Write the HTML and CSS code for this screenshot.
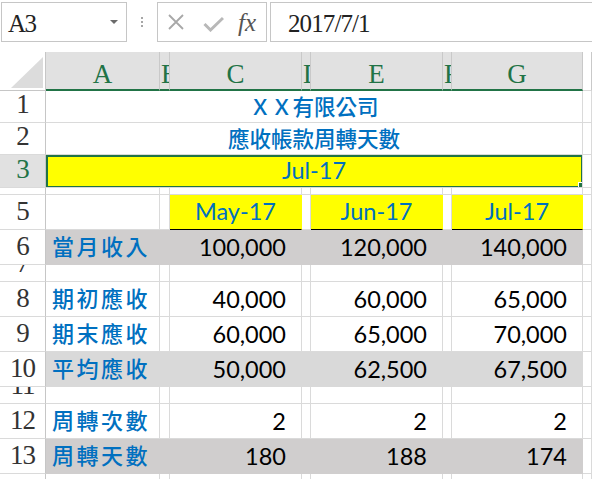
FILE: index.html
```html
<!DOCTYPE html>
<html lang="zh-Hant">
<head>
  <meta charset="UTF-8">
  <title>應收帳款周轉天數</title>
  <link rel="stylesheet" href="styles.css">
</head>
<body>
  <!-- Formula bar -->
  <div class="formula-bar">
    <div class="name-box">
      <span class="ref">A3</span>
      <span class="caret"></span>
    </div>
    <div class="grip"><i></i><i></i><i></i></div>
    <div class="fx-buttons">
      <svg class="icon-cancel" width="18" height="18" viewBox="0 0 18 18">
        <path d="M2 2L16 16M16 2L2 16" />
      </svg>
      <svg class="icon-enter" width="21" height="16" viewBox="0 0 21 16">
        <path d="M1.5 8L7.5 14L20 2" />
      </svg>
      <span class="fx">fx</span>
    </div>
    <div class="formula-input">2017/7/1</div>
  </div>

  <!-- Sheet grid -->
  <div class="sheet">
    <div class="row head">
      <div class="corner"><span class="tri"></span></div>
      <div class="col-head">A</div>
      <div class="col-head narrow">B</div>
      <div class="col-head">C</div>
      <div class="col-head narrow">D</div>
      <div class="col-head">E</div>
      <div class="col-head narrow">F</div>
      <div class="col-head">G</div>
      <div class="col-head off"></div>
    </div>

    <div class="row h32">
      <div class="row-head">1</div>
      <div class="cell merged title">ＸＸ有限公司</div>
      <div class="cell"></div>
    </div>
    <div class="row h32">
      <div class="row-head">2</div>
      <div class="cell merged title">應收帳款周轉天數</div>
      <div class="cell"></div>
    </div>
    <div class="row h33">
      <div class="row-head selected">3</div>
      <div class="cell merged month current">Jul-17<span class="handle"></span></div>
      <div class="cell"></div>
    </div>
    <div class="row h7">
      <div class="row-head">4</div>
      <div class="cell"></div><div class="cell"></div><div class="cell"></div><div class="cell"></div>
      <div class="cell"></div><div class="cell"></div><div class="cell"></div><div class="cell"></div>
    </div>
    <div class="row h35">
      <div class="row-head">5</div>
      <div class="cell"></div>
      <div class="cell"></div>
      <div class="cell month yellow">May-17</div>
      <div class="cell"></div>
      <div class="cell month yellow">Jun-17</div>
      <div class="cell"></div>
      <div class="cell month yellow">Jul-17</div>
      <div class="cell"></div>
    </div>
    <div class="row h35 shade-dark">
      <div class="row-head">6</div>
      <div class="cell label">當月收入</div>
      <div class="cell"></div>
      <div class="cell num">100,000</div>
      <div class="cell"></div>
      <div class="cell num">120,000</div>
      <div class="cell"></div>
      <div class="cell num">140,000</div>
      <div class="cell"></div>
    </div>
    <div class="row h17">
      <div class="row-head">7</div>
      <div class="cell"></div><div class="cell"></div><div class="cell"></div><div class="cell"></div>
      <div class="cell"></div><div class="cell"></div><div class="cell"></div><div class="cell"></div>
    </div>
    <div class="row h35">
      <div class="row-head">8</div>
      <div class="cell label">期初應收</div>
      <div class="cell"></div>
      <div class="cell num">40,000</div>
      <div class="cell"></div>
      <div class="cell num">60,000</div>
      <div class="cell"></div>
      <div class="cell num">65,000</div>
      <div class="cell"></div>
    </div>
    <div class="row h35">
      <div class="row-head">9</div>
      <div class="cell label">期末應收</div>
      <div class="cell"></div>
      <div class="cell num">60,000</div>
      <div class="cell"></div>
      <div class="cell num">65,000</div>
      <div class="cell"></div>
      <div class="cell num">70,000</div>
      <div class="cell"></div>
    </div>
    <div class="row h35 shade-light">
      <div class="row-head">10</div>
      <div class="cell label">平均應收</div>
      <div class="cell"></div>
      <div class="cell num">50,000</div>
      <div class="cell"></div>
      <div class="cell num">62,500</div>
      <div class="cell"></div>
      <div class="cell num">67,500</div>
      <div class="cell"></div>
    </div>
    <div class="row h17">
      <div class="row-head">11</div>
      <div class="cell"></div><div class="cell"></div><div class="cell"></div><div class="cell"></div>
      <div class="cell"></div><div class="cell"></div><div class="cell"></div><div class="cell"></div>
    </div>
    <div class="row h35">
      <div class="row-head">12</div>
      <div class="cell label">周轉次數</div>
      <div class="cell"></div>
      <div class="cell num">2</div>
      <div class="cell"></div>
      <div class="cell num">2</div>
      <div class="cell"></div>
      <div class="cell num">2</div>
      <div class="cell"></div>
    </div>
    <div class="row h35 shade-dark">
      <div class="row-head">13</div>
      <div class="cell label">周轉天數</div>
      <div class="cell"></div>
      <div class="cell num">180</div>
      <div class="cell"></div>
      <div class="cell num">188</div>
      <div class="cell"></div>
      <div class="cell num">174</div>
      <div class="cell"></div>
    </div>
    <div class="row h35">
      <div class="row-head top">14</div>
      <div class="cell"></div><div class="cell"></div><div class="cell"></div><div class="cell"></div>
      <div class="cell"></div><div class="cell"></div><div class="cell"></div><div class="cell"></div>
    </div>
  </div>
</body>
</html>
```

FILE: styles.css
```css
body {
  margin: 0;
  background: #fff;
  font-family: "Liberation Serif", serif;
  overflow: hidden;
}

/* Formula bar */
.formula-bar {
  height: 52px;
  box-sizing: border-box;
  padding-top: 2px;
  display: flex;
  align-items: flex-start;
}

.name-box {
  margin-left: 1px;
  width: 126px;
  height: 40px;
  box-sizing: border-box;
  border: 1px solid #c6c6c6;
  padding: 0 8px 0 6px;
  display: flex;
  justify-content: space-between;
  align-items: flex-start;
  font-size: 25px;
  color: #222;
}

.name-box .ref {
  padding-top: 4px;
  line-height: 34px;
  letter-spacing: -1.5px;
}

.caret {
  align-self: center;
  width: 0;
  height: 0;
  border-left: 4px solid transparent;
  border-right: 4px solid transparent;
  border-top: 4px solid #6b6b6b;
}

.grip {
  width: 30px;
  height: 40px;
  box-sizing: border-box;
  padding-top: 15px;
  display: flex;
  flex-direction: column;
  align-items: center;
  gap: 2px;
}

.grip i {
  width: 2px;
  height: 2px;
  background: #a6a6a6;
}

.fx-buttons {
  width: 110px;
  height: 40px;
  box-sizing: border-box;
  border: 1px solid #c6c6c6;
  padding-left: 9px;
  display: flex;
  align-items: center;
}

.fx-buttons svg path {
  fill: none;
}

.icon-cancel path {
  stroke: #a8a8a8;
  stroke-width: 1.8;
}

.icon-enter {
  margin-left: 18px;
  margin-top: 4px;
}

.icon-enter path {
  stroke: #b8b8b8;
  stroke-width: 3;
}

.fx {
  margin-left: 14px;
  font-style: italic;
  font-size: 25px;
  line-height: 1;
  color: #555;
}

.formula-input {
  margin-left: 3px;
  flex: 1;
  height: 40px;
  box-sizing: border-box;
  border: 1px solid #c6c6c6;
  border-right: none;
  padding: 4px 0 0 17px;
  line-height: 34px;
  font-size: 25px;
  letter-spacing: -0.9px;
  color: #222;
}

/* Sheet */
.row {
  display: grid;
  grid-template-columns: 46px 114px 10px 132px 9px 132px 9px 131px 1fr;
}

.row > div {
  box-sizing: border-box;
  border-right: 1px solid #dadada;
  border-bottom: 1px solid #dadada;
  overflow: hidden;
  white-space: nowrap;
}

.head { height: 39px; }
.h32 { height: 32px; }
.h33 { height: 33px; }
.h7 { height: 7px; }
.h17 { height: 17px; }
.h35 { height: 35px; }

.corner {
  border-right-color: #c6c6c6 !important;
  border-bottom-color: #c6c6c6 !important;
  display: flex;
  justify-content: flex-end;
  align-items: flex-end;
  padding: 0 2px 2px 0;
}

.tri {
  width: 32px;
  height: 31px;
  background: #dcdcdc;
  clip-path: polygon(100% 0, 100% 100%, 0 100%);
}

.col-head {
  background: #e1e1e1;
  border-right-color: #c9c9c9 !important;
  border-bottom: 2px solid #217346 !important;
  color: #217346;
  font-size: 27px;
  line-height: 1;
  display: flex;
  justify-content: center;
  align-items: flex-end;
  padding-bottom: 1px;
}

.col-head.narrow {
  justify-content: flex-start;
  padding-left: 1px;
}

.col-head.off {
  background: #fff;
  border-bottom: 1px solid #dadada !important;
}

.row-head {
  border-right-color: #c6c6c6 !important;
  color: #333;
  font-size: 27px;
  letter-spacing: -1px;
  line-height: 1;
  display: flex;
  justify-content: center;
  align-items: flex-end;
  padding-bottom: 4px;
}

.row-head.top {
  align-items: flex-start;
  padding-top: 3px;
}

.row-head.selected {
  background: #e1e1e1;
  color: #217346;
}

.cell {
  display: flex;
  align-items: flex-end;
}

.merged {
  grid-column: span 7;
  justify-content: center;
}

.title {
  font-family: "Noto Sans CJK TC", sans-serif;
  font-weight: 500;
  font-size: 21.5px;
  line-height: 1;
  color: #0070c0;
  padding-bottom: 6px;
}

.month {
  justify-content: center;
  font-family: Lato, sans-serif;
  font-size: 23.5px;
  line-height: 1;
  color: #0070c0;
  padding-bottom: 6px;
}

.yellow {
  background: #ffff00;
  border-right-color: #ffff00 !important;
  border-bottom-color: #000 !important;
}

.current {
  position: relative;
  background: #ffff00;
  padding-bottom: 5px;
}

/* selection outline and fill handle */
.current::after {
  content: "";
  position: absolute;
  top: 0;
  left: 0;
  right: -1px;
  bottom: -1px;
  border: 2px solid #217346;
  z-index: 2;
}

.handle {
  position: absolute;
  right: -4px;
  bottom: -3px;
  width: 6px;
  height: 6px;
  background: #217346;
  border: 1px solid #fff;
  z-index: 3;
}

.label {
  font-family: "Noto Sans CJK TC", sans-serif;
  font-weight: 500;
  font-size: 22px;
  letter-spacing: 2.5px;
  line-height: 1;
  color: #0070c0;
  padding: 0 0 8px 6px;
}

.num {
  justify-content: flex-end;
  font-family: Lato, sans-serif;
  font-size: 23.5px;
  line-height: 1;
  color: #000;
  padding: 0 15px 5px 0;
}

/* shaded rows: fill hides the gridlines of columns A to G */
.shade-dark .cell:not(:last-child) {
  background: #d0cece;
  border-color: #d0cece;
}

.shade-light .cell:not(:last-child) {
  background: #d9d9d9;
  border-color: #d9d9d9;
}
```
